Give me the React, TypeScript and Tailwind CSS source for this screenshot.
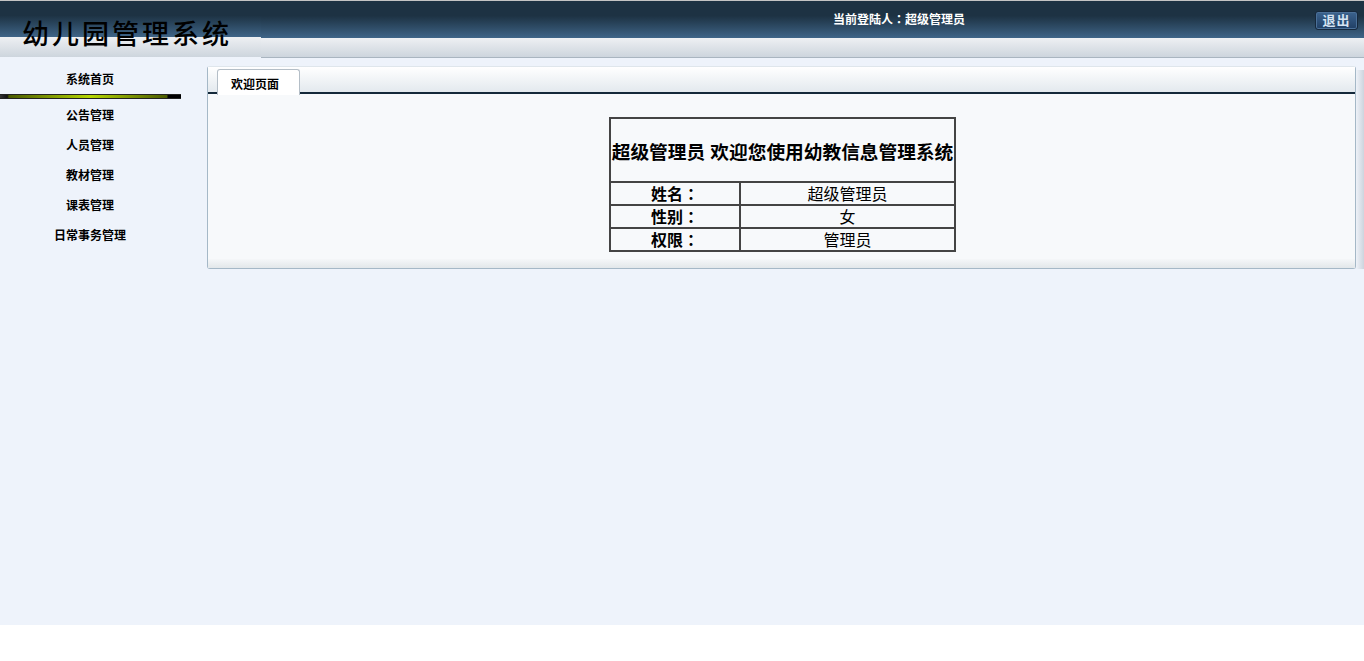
const NAV_ITEMS = ['公告管理', '人员管理', '教材管理', '课表管理', '日常事务管理']

const INFO_ROWS = [
  { label: '姓名', value: '超级管理员' },
  { label: '性别', value: '女' },
  { label: '权限', value: '管理员' },
]

const FONT = "font-['Liberation_Sans','Noto_Sans_CJK_SC',sans-serif]"

// The reference draws the full-width colon centred in its box, as the TC font does
function Colon() {
  return <span className="font-['Noto_Sans_CJK_TC',sans-serif]">：</span>
}

function Header() {
  return (
    <header className="relative h-[58px] border-t border-[#c4c4c4] bg-[#eef3fb]">
      <div className="flex h-[37px] items-center bg-gradient-to-b from-[#1d3243] from-40% to-[#3f6588]">
        <div className="w-[261px] shrink-0" />
        <div className="flex flex-1 items-center">
          <p className="ml-[572px] text-xs font-bold text-white">
            当前登陆人<Colon />超级管理员
          </p>
          <button
            type="button"
            className="mt-[2px] ml-auto mr-[6px] h-[19px] w-[43px] rounded-[3px] border border-[#16283c] bg-gradient-to-b from-[#3c638e] to-[#203f65] text-[13px] leading-[17px] font-bold tracking-[1px] text-[#d5e3f2] shadow-[inset_0_0_0_1px_#4b7098]"
          >
            退出
          </button>
        </div>
      </div>
      <div className="h-[20px] border-b border-[#a9b5c0] bg-gradient-to-b from-[#eef0f3] to-[#cdd5dd]" />

      {/* Logo sits over the header and hangs into the page below it */}
      <div className="absolute left-0 top-0 flex h-[64px] w-[261px] flex-col">
        <div className="h-[36px] bg-gradient-to-b from-[#1d3243] from-40% to-[#3f6588]" />
        <div className="h-[20px] bg-gradient-to-b from-[#eef0f3] to-[#cdd5dd]" />
        <div className="h-[8px] bg-[#eef3fb]" />
        <span className="absolute left-[22px] top-[14px] text-[27px] leading-[40px] font-medium tracking-[3px] text-black">
          幼儿园管理系统
        </span>
      </div>
    </header>
  )
}

function Sidebar() {
  return (
    <aside className="w-[207px] shrink-0 pt-[4px]">
      <div className="w-[181px]">
        <div className="flex h-[20px] items-center justify-center pr-[1px] text-xs font-bold text-black">系统首页</div>
        <div className="mt-[4px] mb-[2px] h-[5px] border-y border-[#222] bg-[linear-gradient(90deg,#333_0%,#111_4%,#4a5a00_5%,#b5d600_50%,#4a5a00_92%,#000_93%)] bg-origin-border" />
        {NAV_ITEMS.map((item) => (
          <div key={item} className="flex h-[30px] items-center justify-center pr-[1px] text-xs font-bold text-black">
            {item}
          </div>
        ))}
      </div>
    </aside>
  )
}

function WelcomeTable() {
  return (
    <table className="mx-auto w-[347px] table-fixed border-collapse border-2 border-[#444] text-center text-black">
      <colgroup>
        <col className="w-[130px]" />
        <col />
      </colgroup>
      <tbody>
        <tr>
          <td colSpan={2} className="h-[64px] border-2 border-[#444] p-0 pt-[6px] text-[18.7px] font-bold whitespace-nowrap">
            超级管理员 欢迎您使用幼教信息管理系统
          </td>
        </tr>
        {INFO_ROWS.map((row) => (
          <tr key={row.label}>
            <td className="h-[23px] border-2 border-[#444] p-0 pt-[1px] text-base leading-[19px] font-bold">
              {row.label}
              <Colon />
            </td>
            <td className="h-[23px] border-2 border-[#444] p-0 pt-[1px] text-base leading-[19px]">{row.value}</td>
          </tr>
        ))}
      </tbody>
    </table>
  )
}

function MainPanel() {
  return (
    <main className="flex h-[203px] flex-1">
      <section className="flex h-full flex-1 flex-col rounded-[3px] border border-[#a5b8c7] border-t-[#dfe6ec] bg-[#f7f9fb]">
        <div className="flex h-[27px] shrink-0 items-start border-b-2 border-[#14293a] bg-gradient-to-b from-white to-[#e3e9ee] pl-[9px] pt-[2px]">
          <div className="flex h-[26px] w-[83px] items-center justify-center rounded-t-[3px] border border-b-0 border-[#b4bec7] bg-white pt-[4px] pr-[7px] text-xs font-bold text-black">
            欢迎页面
          </div>
        </div>
        <div className="flex-1 pt-[23px] pl-[2px]">
          <WelcomeTable />
        </div>
        <div className="h-[9px] shrink-0 bg-gradient-to-b from-[#f5f7f9] to-[#e2e7ea]" />
      </section>
      <div className="mt-[4px] w-[8px] bg-gradient-to-r from-[#eef2f8] to-[#cdd4de]" />
    </main>
  )
}

export default function App() {
  return (
    <div className={`h-[625px] overflow-hidden bg-[#eef3fb] ${FONT}`}>
      <Header />
      <div className="flex pt-[8px]">
        <Sidebar />
        <MainPanel />
      </div>
    </div>
  )
}
